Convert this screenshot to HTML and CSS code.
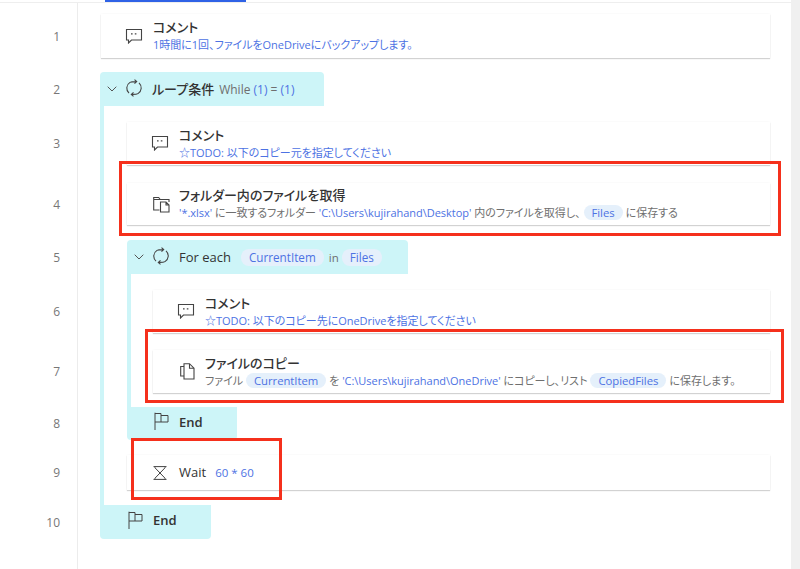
FILE: index.html
```html
<!DOCTYPE html>
<html lang="ja">
<head>
<meta charset="utf-8">
<title>フロー</title>
<link rel="stylesheet" href="styles.css">
</head>
<body>
<svg class="defs" width="0" height="0" aria-hidden="true">
  <symbol id="i-comment" viewBox="0 0 18 16"><path d="M1.500 1.500h15v10.500H6.500L3.500 15v-3h-2z" fill="none" stroke="currentColor" stroke-width="1.100"/><path d="M6.800 5.200v1.400M10.600 5.200v1.400" stroke="currentColor" stroke-width="1.600"/></symbol>
  <symbol id="i-loop" viewBox="0 0 18 18"><path d="M4 14.200A6.800 6.800 0 0 1 5 3.400C6.500 2.500 8 2.600 11.500 2.600M9.500.6l2.200 2-2.200 2M14 3.800a6.800 6.800 0 0 1-1 10.800c-1.500.9-3 .8-6.500.8M8.500 13.400l-2.200 2 2.200 2" fill="none" stroke="currentColor" stroke-width="1.100"/></symbol>
  <symbol id="i-chev" viewBox="0 0 10 6"><path d="M.7.7 5 5 9.300.7" fill="none" stroke="currentColor" stroke-width="1"/></symbol>
  <symbol id="i-folder" viewBox="0 0 17 18"><path d="M6.500 15H.7V2.500h5l1.500 2h8.800v2.500M.7 4.500h6.500" fill="none" stroke="currentColor" stroke-width="1.100"/><path d="M7.500 7h5.500l3 3v7H7.500zM13 7v3h3" fill="#fff" stroke="currentColor" stroke-width="1.100"/></symbol>
  <symbol id="i-copy" viewBox="0 0 15 17"><path d="M4 3.500H.7v9.500H4M4 .7h5.500L14 5.200V16H4zM9.500.7v4.500H14" fill="none" stroke="currentColor" stroke-width="1.100"/></symbol>
  <symbol id="i-flag" viewBox="0 0 15 18"><path d="M1 18V.7M1 1.500h6v8.500H1M7 3.500h7v6.500H7" fill="none" stroke="currentColor" stroke-width="1"/></symbol>
  <symbol id="i-wait" viewBox="0 0 14 14"><path d="M.5.600h13M.5 13.400h13M2 .6v1.200L7 7l5-5.200V.6M2 13.400v-1.200L7 7l5 5.200v1.200" fill="none" stroke="currentColor" stroke-width="1"/></symbol>
</svg>
<div class="page">
  <main class="main">
    <div class="tabbar"><span class="tab"></span></div>
    <div class="list">

      <div class="row r1">
        <span class="num">1</span>
        <div class="body">
          <div class="card h44">
            <svg class="ico ico-comment"><use href="#i-comment"/></svg>
            <div class="txt"><div class="title">コメント</div><div class="desc link">1時間に1回、ファイルをOneDriveにバックアップします。</div></div>
          </div>
        </div>
      </div>

      <div class="row">
        <span class="num">2</span>
        <div class="body">
          <div class="head head-while">
            <svg class="chev"><use href="#i-chev"/></svg>
            <svg class="ico ico-loop"><use href="#i-loop"/></svg>
            <span class="title">ループ条件</span>
            <span class="expr">While <span class="link">(1)</span> = <span class="link">(1)</span></span>
          </div>
        </div>
      </div>

      <div class="row d1 r3">
        <span class="num">3</span>
        <div class="body">
          <div class="card h43">
            <svg class="ico ico-comment"><use href="#i-comment"/></svg>
            <div class="txt"><div class="title">コメント</div><div class="desc link">☆TODO: 以下のコピー元を指定してください</div></div>
          </div>
        </div>
      </div>

      <div class="row d1 r4">
        <span class="num">4</span>
        <div class="body">
          <div class="card h42">
            <svg class="ico ico-folder"><use href="#i-folder"/></svg>
            <div class="txt"><div class="title">フォルダー内のファイルを取得</div><div class="desc"><span class="link">'*.xlsx'</span> に一致するフォルダー <span class="link">'C:\Users\kujirahand\Desktop'</span> 内のファイルを取得し、<span class="pill">Files</span>に保存する</div></div>
          </div>
        </div>
      </div>

      <div class="row d1">
        <span class="num">5</span>
        <div class="body">
          <div class="head head-each">
            <svg class="chev"><use href="#i-chev"/></svg>
            <svg class="ico ico-loop"><use href="#i-loop"/></svg>
            <span class="title">For each</span>
            <span class="pill pill-first">CurrentItem</span><span class="expr">in</span><span class="pill">Files</span>
          </div>
        </div>
      </div>

      <div class="row d2 r3">
        <span class="num">6</span>
        <div class="body">
          <div class="card h43">
            <svg class="ico ico-comment"><use href="#i-comment"/></svg>
            <div class="txt"><div class="title">コメント</div><div class="desc link">☆TODO: 以下のコピー先にOneDriveを指定してください</div></div>
          </div>
        </div>
      </div>

      <div class="row d2 r7">
        <span class="num">7</span>
        <div class="body">
          <div class="card h43">
            <svg class="ico ico-copy"><use href="#i-copy"/></svg>
            <div class="txt"><div class="title">ファイルのコピー</div><div class="desc">ファイル<span class="pill">CurrentItem</span>を <span class="link">'C:\Users\kujirahand\OneDrive'</span> にコピーし、リスト<span class="pill">CopiedFiles</span>に保存します。</div></div>
          </div>
        </div>
      </div>

      <div class="row d1">
        <span class="num">8</span>
        <div class="body">
          <div class="endblock">
            <svg class="ico ico-flag"><use href="#i-flag"/></svg>
            <span class="title">End</span>
          </div>
        </div>
      </div>

      <div class="row d1 r9">
        <span class="num">9</span>
        <div class="body">
          <div class="card h35">
            <svg class="ico ico-wait"><use href="#i-wait"/></svg>
            <span class="title">Wait</span>
            <span class="expr link">60 * 60</span>
          </div>
        </div>
      </div>

      <div class="row">
        <span class="num">10</span>
        <div class="body">
          <div class="endblock endblock-outer">
            <svg class="ico ico-flag"><use href="#i-flag"/></svg>
            <span class="title">End</span>
          </div>
        </div>
      </div>

    </div>
  </main>
  <div class="scrollbar"></div>
  <div class="mark mark-a"></div>
  <div class="mark mark-b"></div>
  <div class="mark mark-c"></div>
</div>
</body>
</html>
```

FILE: styles.css
```css
:root {
  --teal: #cdf5f8;
  --blue: #4d72e3;
  --ink: #333;
  --muted: #6f6f6f;
}
* { box-sizing: border-box; }
html, body { margin: 0; height: 100%; overflow: hidden; background: #fff; }
body { font-family: "Open Sans", "Noto Sans CJK JP", sans-serif; color: var(--ink); font-feature-settings: "palt"; }
.defs { position: absolute; }

.page { position: relative; display: flex; height: 569px; }
.main { flex: 1; min-width: 0; display: flex; flex-direction: column; }
.scrollbar { width: 9px; background: #f0f0f0; }

.tabbar { height: 3px; background: linear-gradient(#fff 2px, #eeeeee 2px); padding-left: 105px; flex: none; }
.tab { display: block; width: 141px; height: 2px; background: #2f62e6; }

.list {
  flex: 1;
  background: linear-gradient(#ececec, #ececec) 77px 0 / 1px 100% no-repeat;
}
.row { display: grid; grid-template-columns: 78px 1fr; align-items: center; }
.d1 { background: linear-gradient(var(--teal), var(--teal)) 100px 0 / 4px 100% no-repeat; }
.d2 {
  background:
    linear-gradient(var(--teal), var(--teal)) 100px 0 / 4px 100% no-repeat,
    linear-gradient(var(--teal), var(--teal)) 127px 0 / 4px 100% no-repeat;
}
.r1 { padding: 11px 0 14px; }
.r3 { padding: 16px 0 9px; }
.r4 { padding: 9px 0 15px; }
.r7 { padding: 8px 0 14px; }
.r9 { padding: 15px 0 15px; }

.num { font-size: 12px; color: #777; text-align: right; padding-right: 18px; }
.body { padding-left: 23px; padding-right: 21px; min-width: 0; }
.d1 .body { padding-left: 49px; }
.d2 .body { padding-left: 75px; }

.card {
  display: flex; align-items: center;
  background: #fff;
  box-shadow: 0 1px 1px rgba(0,0,0,.16), 0 0 2px rgba(0,0,0,.05);
  padding-left: 25px;
}
.h44 { height: 44px; }
.h43 { height: 43px; }
.h42 { height: 42px; }
.h35 { height: 35px; }

.txt { margin-left: 9px; min-width: 0; }
.title { font-size: 13px; line-height: 17px; font-weight: 500; color: var(--ink); white-space: nowrap; }
.desc { font-size: 11px; line-height: 17px; color: var(--muted); white-space: nowrap; letter-spacing: -0.03px; }
.link { color: var(--blue); }
.expr { font-size: 12px; color: var(--muted); margin-left: 4px; }
.card > .title { margin-left: 0; }
.card > .expr { font-size: 11.5px; margin-left: 9px; }
.expr.link { color: var(--blue); }
.pill {
  display: inline-block;
  font-size: 11.3px; line-height: 15px;
  color: var(--blue);
  background: #e5f0fb;
  border-radius: 8px;
  padding: 0 8px;
  margin: 0 3px;
}

.head {
  display: flex; align-items: center;
  height: 34px;
  background: var(--teal);
  border-radius: 4px 4px 0 0;
  padding-left: 7px;
}
.head .title { margin-left: 9px; }
.head-while { width: 224px; margin-left: -1px; }
.head-each { width: 281px; }
.head .pill { font-size: 11.7px; line-height: 17px; margin: 0 0 0 3px; }
.head .pill-first { margin-left: 10px; }
.head .expr { font-size: 11.5px; margin-left: 5px; }
.head-while .expr { font-size: 12px; }

.endblock {
  display: flex; align-items: center;
  height: 33px;
  width: 110px;
  background: var(--teal);
  border-radius: 0 0 4px 4px;
  padding-left: 27px;
}
.endblock .title { margin-left: 10px; margin-top: -3px; font-weight: 600; }
.endblock-outer { height: 34px; width: 111px; margin-left: -1px; padding-left: 28px; }

.ico { flex: none; color: #444; }
.chev { width: 10px; height: 6px; color: #555; margin-right: 8px; flex: none; }
.ico-comment { width: 18px; height: 16px; margin-left: -1px; margin-right: 1px; margin-top: -1px; }
.ico-loop { width: 18px; height: 18px; margin-top: -3px; }
.ico-folder { width: 17px; height: 18px; margin-left: 1px; }
.ico-copy { width: 15px; height: 17px; margin-left: 2px; margin-right: 1px; }
.ico-flag { width: 15px; height: 18px; margin-top: -5px; }
.ico-wait { width: 14px; height: 14px; margin-left: 1px; margin-right: 12px; }

.mark { position: absolute; border: 3px solid #f5301c; pointer-events: none; }
.mark-a { left: 119px; top: 161px; width: 662px; height: 75px; }
.mark-b { left: 145px; top: 329px; width: 639px; height: 74px; }
.mark-c { left: 131px; top: 438px; width: 151px; height: 62px; }
```
